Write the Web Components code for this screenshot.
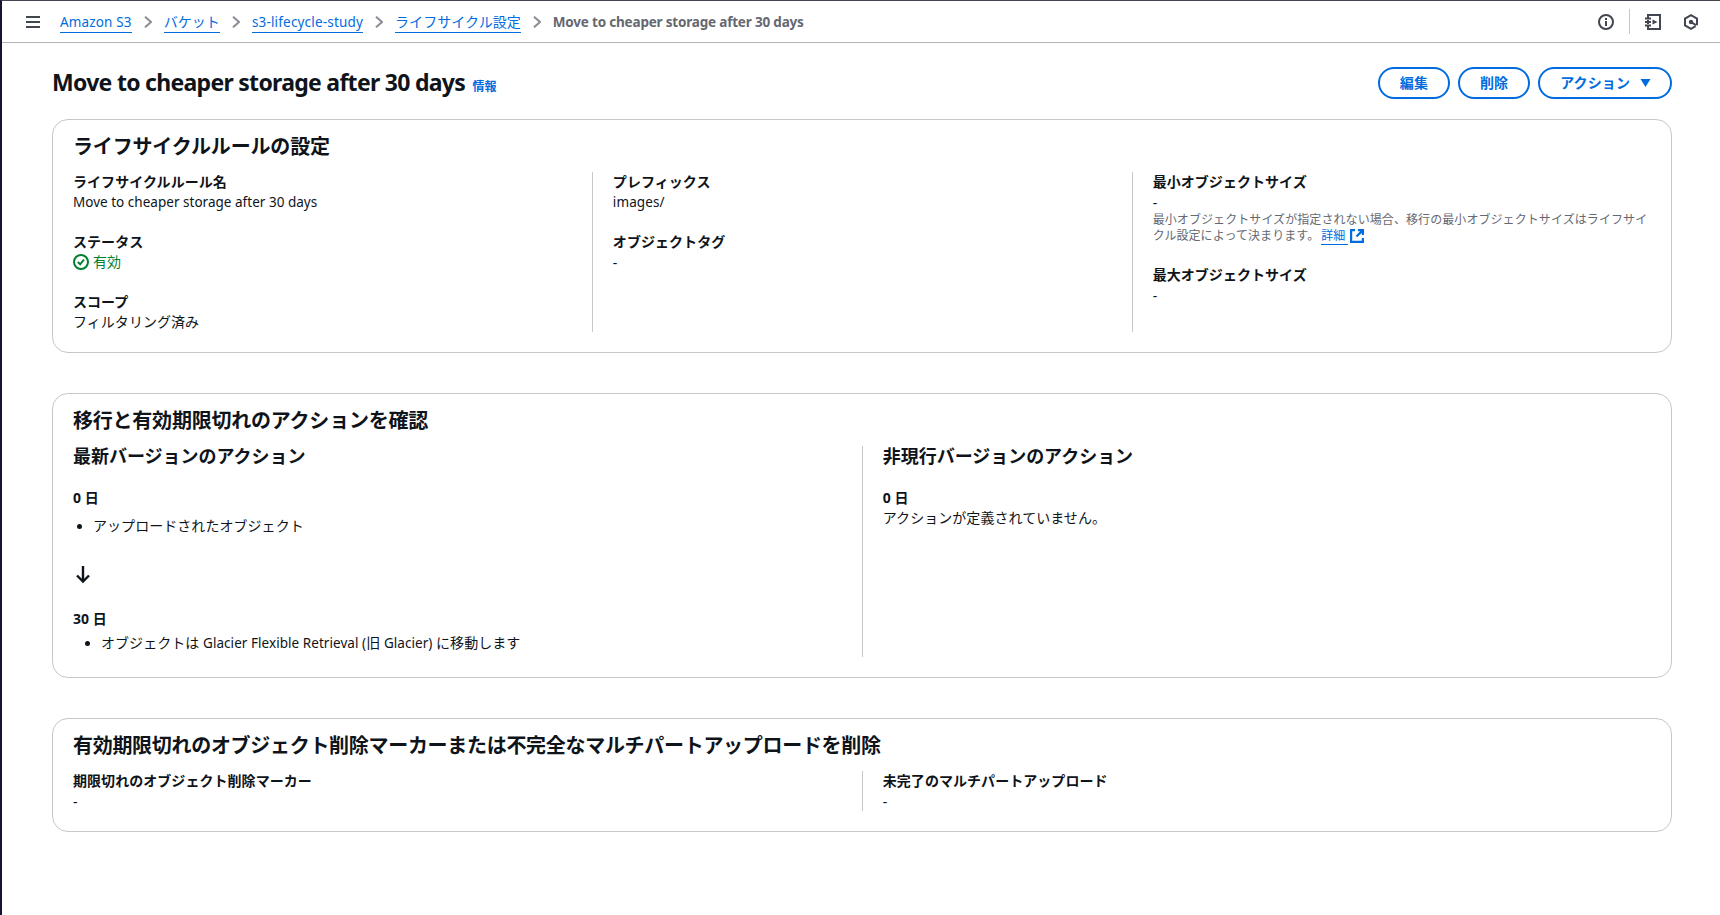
<!DOCTYPE html>
<html lang="ja">
<head>
<meta charset="utf-8">
<title>Move to cheaper storage after 30 days</title>
<style>
body{margin:0;background:#fff;color:#0f141a;font:14px/20px "Noto Sans","Noto Sans CJK JP",sans-serif;letter-spacing:.05px;overflow:hidden}
</style>
</head>
<body>
<s3-shell>
  <crumb-bar slot="top">
    <crumb-link><latin-run ls="0.15">Amazon S3</latin-run></crumb-link>
    <crumb-link>バケット</crumb-link>
    <crumb-link><latin-run ls="0.18">s3-lifecycle-study</latin-run></crumb-link>
    <crumb-link>ライフサイクル設定</crumb-link>
    <crumb-link current><latin-run ls="-0.19">Move to cheaper storage after 30 days</latin-run></crumb-link>
  </crumb-bar>
  <page-title info="情報" slot="title"><latin-run ls="-0.71" size="23">Move to cheaper storage after 30 days</latin-run><pill-button slot="actions">編集</pill-button><pill-button slot="actions">削除</pill-button><pill-button slot="actions" caret>アクション</pill-button></page-title>
  <info-card heading="ライフサイクルルールの設定" cols="3" ls="-0.17">
    <info-col>
      <key-value label="ライフサイクルルール名"><latin-run ls="0.02">Move to cheaper storage after 30 days</latin-run></key-value>
      <key-value label="ステータス"><status-ok>有効</status-ok></key-value>
      <key-value label="スコープ">フィルタリング済み</key-value>
    </info-col>
    <info-col divided>
      <key-value label="プレフィックス"><latin-run ls="0.1">images/</latin-run></key-value>
      <key-value label="オブジェクトタグ"><empty-mark>-</empty-mark></key-value>
    </info-col>
    <info-col divided>
      <key-value label="最小オブジェクトサイズ"><empty-mark>-</empty-mark><help-text slot="help" link="詳細">最小オブジェクトサイズが指定されない場合、移行の最小オブジェクトサイズはライフサイクル設定によって決まります。</help-text></key-value>
      <key-value label="最大オブジェクトサイズ"><empty-mark>-</empty-mark></key-value>
    </info-col>
  </info-card>
  <info-card heading="移行と有効期限切れのアクションを確認" cols="2" ls="-0.22">
    <action-timeline heading="最新バージョンのアクション">
      <day-step day="0" bullet gap="8">アップロードされたオブジェクト</day-step>
      <down-arrow></down-arrow>
      <day-step day="30" bullet gap="4" indent="8">オブジェクトは <latin-run ls="0.05">Glacier Flexible Retrieval (</latin-run>旧 <latin-run ls="0.05">Glacier)</latin-run> に移動します</day-step>
    </action-timeline>
    <action-timeline divided heading="非現行バージョンのアクション">
      <day-step day="0">アクションが定義されていません。</day-step>
    </action-timeline>
  </info-card>
  <info-card heading="有効期限切れのオブジェクト削除マーカーまたは不完全なマルチパートアップロードを削除" cols="2" ls="-0.3">
    <info-col><key-value label="期限切れのオブジェクト削除マーカー"><empty-mark>-</empty-mark></key-value></info-col>
    <info-col divided><key-value label="未完了のマルチパートアップロード"><empty-mark>-</empty-mark></key-value></info-col>
  </info-card>
</s3-shell>
<script>
const define = (name, render) => customElements.define(name, class extends HTMLElement {
  constructor() { super(); this.attachShadow({ mode: 'open' }); }
  connectedCallback() { this.shadowRoot.innerHTML = render(this); }
});
const attr = (el, n, d = '') => el.getAttribute(n) ?? d;

define('latin-run', el => `<style>:host{display:inline;font-size:${attr(el, 'size', '13.5')}px;letter-spacing:${attr(el, 'ls', '0')}px}</style><slot></slot>`);

define('empty-mark', () => `<style>:host{display:block;padding-top:1px}</style><slot></slot>`);

define('s3-shell', () => `<style>
:host{display:block;box-sizing:border-box;height:915px;border-left:2px solid #161431;border-top:1px solid #424650;background:#fff}
main{padding:24px 48px 0 50px;display:flex;flex-direction:column}
.cards{display:flex;flex-direction:column;gap:40px;margin-top:20px}
</style><slot name="top"></slot><main><slot name="title"></slot><div class="cards"><slot></slot></div></main>`);

define('crumb-bar', () => `<style>
:host{display:flex;align-items:center;height:41px;border-bottom:1px solid #b4b4bb;padding:0 21px 0 22px;box-sizing:content-box;color:#424650}
nav{display:flex;margin-left:20px;flex:1}
.tools{display:flex;align-items:center}
i{width:1px;height:25px;background:#c6c6cd;margin:0 15px}
svg{display:block;fill:none;stroke:currentColor;stroke-width:2}
.menu{margin-left:2px}
.hex{margin-left:22px}
</style>
<svg class="menu" width="14" height="12" viewBox="0 0 14 12"><path d="M0 1h14M0 6h14M0 11h14"/></svg>
<nav><slot></slot></nav>
<div class="tools">
<svg width="16" height="16" viewBox="0 0 16 16"><circle cx="8" cy="8" r="7"/><path d="M8 12V7M8 6V4"/></svg>
<i></i>
<svg width="16" height="16" viewBox="0 0 16 16"><path d="M3 3.500V1h12v14H3v-2.500M3 6v1M3 9v1M0 4.500h6M0 8h6M0 11.500h6"/><path d="M7.500 5.500v5l5-2.500z" fill="currentColor" stroke="none"/></svg>
<svg class="hex" width="16" height="16" viewBox="0 0 16 16"><path d="M12.600 12.200L8 14.800l-6-3.400V4.600l6-3.400 6 3.400v6.600"/><circle cx="8" cy="8" r="2.200" fill="currentColor" stroke="none"/><path d="M8 8l5 3.200"/></svg>
</div>`);

define('crumb-link', el => el.hasAttribute('current')
  ? `<style>:host{display:block;color:#656871;font-weight:700;margin-top:1px}</style><slot></slot>`
  : `<style>
:host{display:flex;align-items:center;color:#006ce0}
a{border-bottom:1px solid #006ce0;line-height:20px;height:20px;margin-top:1px}
svg{margin:0 12px;fill:none;stroke:#8c8c94;stroke-width:2}
</style><a><slot></slot></a><svg width="8" height="12" viewBox="0 0 8 12"><path d="M1 .7l6 5.300-6 5.300"/></svg>`);

define('page-title', el => `<style>
:host{display:flex;justify-content:space-between;align-items:center;height:32px}
h1{margin:2px 0 0;font-size:24px;line-height:30px;font-weight:700}
small{font-size:12px;color:#006ce0;margin-left:7.5px;letter-spacing:0}
div{display:flex;gap:8px}
</style><h1><slot></slot><small>${attr(el, 'info')}</small></h1><div><slot name="actions"></slot></div>`);

define('pill-button', el => `<style>
:host{display:flex;align-items:center;box-sizing:border-box;height:32px;border:2px solid #006ce0;border-radius:20px;padding:0 20px;color:#006ce0;font-weight:700;letter-spacing:.1px}
svg{margin:0 -1px 0 10px}
</style><slot></slot>${el.hasAttribute('caret') ? '<svg width="11" height="10" viewBox="0 0 11 10"><path d="M.5 1h10L5.500 9z" fill="#006ce0"/></svg>' : ''}`);

define('info-card', el => `<style>
:host{display:block;border:1px solid #c6c6cd;border-radius:16px;padding:0 20px 20px}
h2{margin:0;padding:15px 0 13px;font-size:20px;line-height:24px;font-weight:700;letter-spacing:${attr(el, 'ls', '0')}px}
.grid{display:grid;grid-template-columns:repeat(${attr(el, 'cols')},1fr);gap:20px;margin:0 -.5px 0 -21px}
</style><h2>${attr(el, 'heading')}</h2><div class="grid"><slot></slot></div>`);

const column = el => `border-left:1px solid ${el.hasAttribute('divided') ? '#c6c6cd' : 'transparent'};padding-left:20px;min-width:0`;

define('info-col', el => `<style>:host{display:flex;flex-direction:column;gap:20px;${column(el)}}</style><slot></slot>`);

define('key-value', el => `<style>
:host{display:block}b{display:block}
div{height:20px}
</style><b>${attr(el, 'label')}</b><div><slot></slot></div><slot name="help"></slot>`);

define('status-ok', () => `<style>
:host{display:flex;align-items:center;gap:4px;color:#00802f}
svg{fill:none;stroke:currentColor;stroke-width:2}
</style><svg width="16" height="16" viewBox="0 0 16 16"><circle cx="8" cy="8" r="7"/><path d="M4.800 8l2.400 2.300L11 5.500"/></svg><slot></slot>`);

define('help-text', el => `<style>
:host{display:block;font-size:12px;line-height:16px;height:33px;color:#656871;letter-spacing:.08px}
a{color:#006ce0;border-bottom:1px solid;padding-right:3px;margin-left:2px}
svg{vertical-align:-3px;margin-left:1.5px;fill:none;stroke:#006ce0;stroke-width:2.200}
</style><slot></slot><a>${attr(el, 'link')}</a><svg width="14" height="14" viewBox="0 0 14 14"><path d="M5 1.100H1.100v11.800h11.800V9M8 1.100h4.900V6M12.900 1.100L6.500 7.500"/></svg>`);

define('action-timeline', el => `<style>
:host{display:block;${column(el)}}
h3{margin:-1px 0 21px;font-size:18px;line-height:22px;font-weight:700;letter-spacing:-.03px}
</style><h3>${attr(el, 'heading')}</h3><slot></slot>`);

define('day-step', el => `<style>
:host{display:block}
:host([indent]){padding-bottom:4px}
b{display:block}
div{display:flex;margin-top:${attr(el, 'gap', '0')}px;padding-left:${attr(el, 'indent', '0')}px}
i{width:5px;height:5px;border-radius:50%;background:#0f141a;margin:8px 11px 0 4px}
</style><b>${attr(el, 'day')} 日</b><div>${el.hasAttribute('bullet') ? '<i></i>' : ''}<span><slot></slot></span></div>`);

define('down-arrow', () => `<style>
:host{display:flex;height:73px;padding:30px 0 0 3px;box-sizing:border-box}
svg{fill:none;stroke:#0f141a;stroke-width:2.400}
</style><svg width="14" height="18" viewBox="0 0 14 18"><path d="M7 0v16M1 9.500l6 6 6-6"/></svg>`);
</script>
</body>
</html>
